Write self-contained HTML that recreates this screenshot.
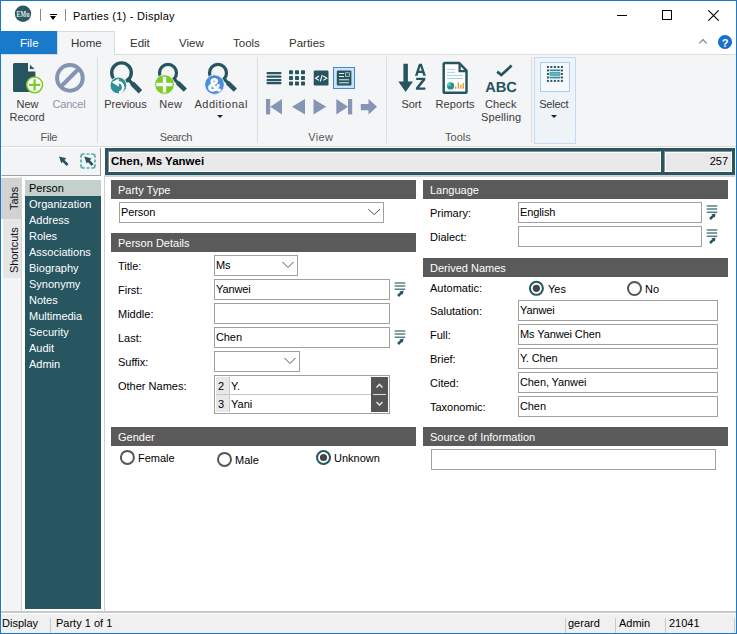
<!DOCTYPE html>
<html><head><meta charset="utf-8">
<style>
*{margin:0;padding:0;box-sizing:border-box}
html,body{width:737px;height:634px;overflow:hidden;background:#fff}
body{position:relative;font-family:"Liberation Sans",sans-serif;font-size:12px;color:#000}
.a{position:absolute}
.t{position:absolute;white-space:nowrap;line-height:1}
/* window border */
#wb{left:0;top:0;width:737px;height:634px;border:1px solid #1979ca;z-index:50;pointer-events:none}
.rib{color:#444}
.bar{position:absolute;background:#5a5a5a;color:#fff;font-size:11px;line-height:20px;padding-left:7px;letter-spacing:0px}
.inp{position:absolute;background:#fff;border:1px solid #a0a0a0;font-size:11px;line-height:18px;padding-left:1px;letter-spacing:-0.1px}
.lbl{position:absolute;font-size:11px;line-height:14px;color:#000;white-space:nowrap;letter-spacing:0px}
.nav{position:absolute;color:#fff;font-size:11px;line-height:16px;left:29px;white-space:nowrap;letter-spacing:0px}
.radio{position:absolute;width:14px;height:14px;border:1.5px solid #333;border-radius:50%;background:#fff}
.radio.on::after{content:"";position:absolute;left:2px;top:2px;width:7px;height:7px;border-radius:50%;background:#333}
.sb{position:absolute;top:614px;font-size:11px;line-height:19px;white-space:nowrap;color:#000;letter-spacing:0px}
.sep{position:absolute;top:618px;width:1px;height:15px;background:#c8c8c8}
</style></head><body>
<div id="wb" class="a"></div>

<!-- title bar -->
<svg class="a" style="left:14px;top:5px" width="18" height="18"><circle cx="9" cy="8.8" r="8.2" fill="#2a5a62"/><text x="2.6" y="11.6" font-family="Liberation Serif" font-weight="bold" font-size="8" fill="#e6ecec" textLength="13" lengthAdjust="spacingAndGlyphs">EMu</text></svg>
<div class="a" style="left:40px;top:9px;width:1px;height:12px;background:#8a8a8a"></div>
<div class="a" style="left:50px;top:14px;width:7px;height:1px;background:#000"></div>
<div class="a" style="left:50px;top:16px;width:0;height:0;border-left:3.5px solid transparent;border-right:3.5px solid transparent;border-top:4px solid #000"></div>
<div class="a" style="left:65px;top:9px;width:1px;height:12px;background:#8a8a8a"></div>
<div class="t" style="left:73px;top:11px;font-size:11px;letter-spacing:0.25px;color:#000">Parties (1) - Display</div>
<div class="a" style="left:617px;top:15px;width:10px;height:1px;background:#000"></div>
<div class="a" style="left:662px;top:10px;width:10px;height:10px;border:1px solid #000"></div>
<svg class="a" style="left:708px;top:10px" width="11" height="11"><path d="M0.3 0.3 L10.7 10.7 M10.7 0.3 L0.3 10.7" stroke="#000" stroke-width="1.1"/></svg>

<!-- tabs -->
<div class="a" style="left:1px;top:31px;width:56px;height:23px;background:#1979ca"></div>
<div class="t" style="left:20px;top:38px;color:#fff;font-size:11.5px">File</div>
<div class="a" style="left:57px;top:31px;width:58px;height:24px;background:#f4f5f6;border:1px solid #dadbdc;border-bottom:none;z-index:2"></div>
<div class="t rib" style="left:71px;top:38px;font-size:11.5px;color:#333;z-index:3">Home</div>
<div class="t" style="left:130px;top:38px;font-size:11.5px;color:#333">Edit</div>
<div class="t" style="left:179px;top:38px;font-size:11.5px;color:#333">View</div>
<div class="t" style="left:233px;top:38px;font-size:11.5px;color:#333">Tools</div>
<div class="t" style="left:289px;top:38px;font-size:11.5px;color:#333">Parties</div>
<svg class="a" style="left:698px;top:38px" width="11" height="8"><path d="M1.3 5.3 L5 1.6 L8.7 5.3" stroke="#808080" stroke-width="1.2" fill="none"/></svg>
<svg class="a" style="left:718px;top:35px" width="14" height="14"><circle cx="7" cy="7" r="6.6" fill="#1873cd" stroke="#0d62b6" stroke-width="0.8"/><text x="7.2" y="11.8" font-family="Liberation Sans" font-weight="bold" font-size="11" fill="#fff" text-anchor="middle">?</text></svg>

<!-- ribbon -->
<div class="a" style="left:1px;top:54px;width:735px;height:93px;background:#f4f5f6;border-top:1px solid #dadbdc;border-bottom:1px solid #dadbdc"></div>


<!-- ribbon groups -->
<div class="a" style="left:97px;top:57px;width:1px;height:86px;background:#dcdddf"></div>
<div class="a" style="left:257px;top:57px;width:1px;height:86px;background:#dcdddf"></div>
<div class="a" style="left:386px;top:57px;width:1px;height:86px;background:#dcdddf"></div>
<div class="a" style="left:531px;top:57px;width:1px;height:86px;background:#dcdddf"></div>

<!-- New Record icon -->
<svg class="a" style="left:10px;top:60px" width="40" height="40">
<path d="M4.5 3 H18 V11.6 H25.4 V30.5 Q25.4 32 24 32 H4.5 Q3 32 3 30.5 V4.5 Q3 3 4.5 3 Z" fill="#265560"/>
<path d="M19.9 4.7 V9.1 H24.6 Z" fill="#265560"/>
<circle cx="24.6" cy="24.8" r="7.9" fill="#fff" stroke="#7ccb26" stroke-width="1.5"/>
<path d="M24.6 19.2 V30.6 M18.9 24.8 H30.3" stroke="#7ccb26" stroke-width="2.3"/>
</svg>
<div class="t" style="left:16.6px;top:99px;font-size:11px;letter-spacing:-0.02px;color:#3a3a3a">New</div>
<div class="t" style="left:9.6px;top:112px;font-size:11px;letter-spacing:-0.07px;color:#3a3a3a">Record</div>
<!-- Cancel -->
<svg class="a" style="left:52px;top:60px" width="36" height="36">
<circle cx="17.9" cy="17.9" r="12.8" fill="none" stroke="#8494b3" stroke-width="4"/>
<path d="M27 8.5 L8.5 27" stroke="#8494b3" stroke-width="4"/>
</svg>
<div class="t" style="left:52.6px;top:99px;font-size:11px;letter-spacing:-0.25px;color:#8a96a8">Cancel</div>
<div class="t" style="left:40.6px;top:132px;font-size:11px;letter-spacing:-0.31px;color:#555">File</div>

<!-- Previous -->
<svg class="a" style="left:105px;top:58px" width="40" height="40">
<circle cx="16.5" cy="14.7" r="9.8" fill="none" stroke="#265560" stroke-width="3.4"/>
<path d="M22 20.3 L27.6 25.9" stroke="#265560" stroke-width="3.4"/>
<path d="M27 25.3 L35.4 33.8" stroke="#265560" stroke-width="5"/>
<circle cx="13.4" cy="27.4" r="8.4" fill="#2c8f99" stroke="#f4f5f6" stroke-width="1"/>
<path d="M13.6 24.2 A5.1 5.1 0 0 1 14 34.3" stroke="#fff" stroke-width="2.6" fill="none"/>
<path d="M6.8 24.3 L13.8 20.6 L13.8 28.8 Z" fill="#fff"/>
</svg>
<div class="t" style="left:104.3px;top:99px;font-size:11px;letter-spacing:-0.06px;color:#3a3a3a">Previous</div>
<!-- New search -->
<svg class="a" style="left:150px;top:58px" width="40" height="40">
<circle cx="18" cy="14.9" r="8.5" fill="none" stroke="#265560" stroke-width="3.2"/>
<path d="M23.5 20.5 L28.2 25.2" stroke="#265560" stroke-width="3.2"/>
<path d="M27.6 24.6 L35.3 32.2" stroke="#265560" stroke-width="4.6"/>
<circle cx="14.5" cy="26.5" r="9.8" fill="#7ccb26" stroke="#f4f5f6" stroke-width="0.8"/>
<path d="M14.5 18.7 V34.6 M6.2 26.5 H22.4" stroke="#f4f5f6" stroke-width="3.4"/>
</svg>
<div class="t" style="left:159.3px;top:99px;font-size:11px;letter-spacing:0.28px;color:#3a3a3a">New</div>
<!-- Additional -->
<svg class="a" style="left:195px;top:58px" width="44" height="40">
<circle cx="23" cy="14.9" r="8.5" fill="none" stroke="#265560" stroke-width="3.2"/>
<path d="M28.5 20.5 L33.2 25.2" stroke="#265560" stroke-width="3.2"/>
<path d="M32.6 24.6 L40.3 32.2" stroke="#265560" stroke-width="4.6"/>
<circle cx="19.5" cy="26.6" r="9.8" fill="#4a8fdc" stroke="#f4f5f6" stroke-width="0.8"/>
<text x="19.3" y="32.8" font-family="Liberation Sans" font-weight="bold" font-size="18" fill="#fff" stroke="#fff" stroke-width="0.8" text-anchor="middle" style="text-rendering:geometricPrecision">&amp;</text>
</svg>
<div class="t" style="left:194.4px;top:99px;font-size:11px;letter-spacing:0.52px;color:#3a3a3a">Additional</div>
<div class="a" style="left:217px;top:115px;width:0;height:0;border-left:3px solid transparent;border-right:3px solid transparent;border-top:3px solid #222"></div>
<div class="t" style="left:159.8px;top:132px;font-size:11px;letter-spacing:-0.45px;color:#555">Search</div>

<!-- View icons -->
<svg class="a" style="left:264px;top:68px" width="100" height="50">
<g fill="#265560">
<rect x="2.5" y="4" width="15" height="2.2" rx="1"/>
<rect x="2.5" y="7.5" width="15" height="2.2" rx="1"/>
<rect x="2.5" y="11" width="15" height="2.2" rx="1"/>
<rect x="2.5" y="14" width="15" height="2.2" rx="1"/>
<rect x="25" y="2.3" width="4" height="4" rx="0.8"/><rect x="31" y="2.3" width="4" height="4" rx="0.8"/><rect x="37" y="2.3" width="4" height="4" rx="0.8"/>
<rect x="25" y="8" width="4" height="4" rx="0.8"/><rect x="31" y="8" width="4" height="4" rx="0.8"/><rect x="37" y="8" width="4" height="4" rx="0.8"/>
<rect x="25" y="13.5" width="4" height="4" rx="0.8"/><rect x="31" y="13.5" width="4" height="4" rx="0.8"/><rect x="37" y="13.5" width="4" height="4" rx="0.8"/>
<rect x="49.7" y="2.5" width="14.8" height="15" rx="1.2"/>
</g>
<path d="M55 8 L51.5 10.2 L55 12.4 M56.3 13.5 L58.2 6.8 M59.3 8 L62.8 10.2 L59.3 12.4" stroke="#fff" stroke-width="1.1" fill="none"/>
</svg>
<div class="a" style="left:333px;top:67px;width:22px;height:22px;background:#cce4f7;border:1px solid #3c8de0"></div>
<svg class="a" style="left:336px;top:70px" width="16" height="16">
<rect x="0.8" y="0.5" width="14.6" height="15" rx="1.2" fill="#265560"/>
<path d="M3 3.5 H8 M3 6.5 H8 M3 9.8 H13 M3 12.8 H13" stroke="#e8eef0" stroke-width="1"/>
<rect x="9.5" y="2.8" width="3.8" height="3.5" fill="none" stroke="#c8d0d4" stroke-width="0.8"/>
</svg>
<svg class="a" style="left:262px;top:96px" width="120" height="22">
<g fill="#8595b3">
<rect x="4" y="3" width="4.2" height="15.4"/>
<path d="M8.2 10.7 L20 3 L20 18.4 Z"/>
<path d="M30 10.7 L43 3 L43 18.4 Z"/>
<path d="M51.5 3 L64.2 10.7 L51.5 18.4 Z"/>
<path d="M74.3 3 L86 10.7 L74.3 18.4 Z"/>
<rect x="86" y="3" width="4.2" height="15.4"/>
<path d="M98.8 7.9 L106.5 7.9 L106.5 3 L115 10.7 L106.5 18.4 L106.5 14.3 L98.8 14.3 Z"/>
</g>
</svg>
<div class="t" style="left:308.2px;top:132px;font-size:11px;letter-spacing:0.37px;color:#555">View</div>

<!-- Sort -->
<svg class="a" style="left:395px;top:58px" width="34" height="38">
<path d="M8.4 5.7 H12.9 V23.4 H18 L10.65 33.9 L3.3 23.4 H8.4 Z" fill="#265560"/>
<path fill-rule="evenodd" d="M19.9 17.7 L24 5.7 H26.8 L30.9 17.7 H28.2 L27.4 15.1 H23.4 L22.6 17.7 Z M24.1 12.8 H26.7 L25.4 8.6 Z" fill="#265560"/>
<path d="M21.2 19.8 H30.3 V21.9 L24.3 29.6 H30.4 V31.8 H20.9 V29.7 L26.9 22 H21.2 Z" fill="#265560"/>
</svg>
<div class="t" style="left:401.4px;top:99px;font-size:11px;letter-spacing:-0.06px;color:#3a3a3a">Sort</div>
<!-- Reports -->
<svg class="a" style="left:440px;top:60px" width="32" height="36">
<path d="M5 3.1 H19.3 L26.5 10.7 V31.5 Q26.5 32.8 25.2 32.8 H5 Q3.7 32.8 3.7 31.5 V4.4 Q3.7 3.1 5 3.1 Z" fill="#fff" stroke="#265560" stroke-width="2.5" stroke-linejoin="round"/>
<path d="M19.6 3.5 V11.2 H26.3" fill="none" stroke="#265560" stroke-width="2.3"/>
<path d="M7 9.4 H15 M7 12.4 H15 M7 15.5 H23 M7 18.5 H23" stroke="#a6d2ee" stroke-width="1"/>
<circle cx="10.6" cy="25.9" r="3.6" fill="#2c8f99"/>
<path d="M10.6 25.9 V22.3 A3.6 3.6 0 0 0 7 25.9 Z" fill="#4fd0ac"/>
<path d="M15.7 28.8 V26.5 M18.3 28.8 V22.2 M20.8 28.8 V24.5 M23.3 28.8 V23" stroke="#e39a2b" stroke-width="1.3"/>
</svg>
<div class="t" style="left:435.6px;top:99px;font-size:11px;letter-spacing:0.08px;color:#3a3a3a">Reports</div>
<!-- Check Spelling -->
<svg class="a" style="left:484px;top:60px" width="36" height="36">
<path d="M13.2 11.6 L17.3 15 L27.6 5.6" stroke="#265560" stroke-width="2.7" fill="none"/>
<text x="17.1" y="31.6" font-family="Liberation Sans" font-weight="bold" font-size="14.6" fill="#265560" text-anchor="middle" style="text-rendering:geometricPrecision">ABC</text>
</svg>
<div class="t" style="left:485.0px;top:99px;font-size:11px;letter-spacing:0.05px;color:#3a3a3a">Check</div>
<div class="t" style="left:480.9px;top:112px;font-size:11px;letter-spacing:0.17px;color:#3a3a3a">Spelling</div>
<div class="t" style="left:445.1px;top:132px;font-size:11px;letter-spacing:-0.02px;color:#555">Tools</div>

<!-- Select -->
<div class="a" style="left:534px;top:57px;width:42px;height:87px;background:#eef3f8;border:1px solid #c4daf2"></div>
<div class="a" style="left:540px;top:62px;width:30px;height:30px;background:#f6f9fc;border:1px solid #a9cdf2"></div>
<svg class="a" style="left:545px;top:64px" width="20" height="20"><g fill="#265560"><rect x="1.90" y="2.00" width="2" height="2"/><rect x="1.90" y="15.90" width="2" height="2"/><rect x="5.35" y="2.00" width="2" height="2"/><rect x="5.35" y="15.90" width="2" height="2"/><rect x="8.90" y="2.00" width="2" height="2"/><rect x="8.90" y="15.90" width="2" height="2"/><rect x="12.40" y="2.00" width="2" height="2"/><rect x="12.40" y="15.90" width="2" height="2"/><rect x="15.90" y="2.00" width="2" height="2"/><rect x="15.90" y="15.90" width="2" height="2"/><rect x="1.90" y="5.45" width="2" height="2"/><rect x="15.90" y="5.45" width="2" height="2"/><rect x="1.90" y="8.95" width="2" height="2"/><rect x="15.90" y="8.95" width="2" height="2"/><rect x="1.90" y="12.45" width="2" height="2"/><rect x="15.90" y="12.45" width="2" height="2"/></g>
<rect x="4.6" y="5.5" width="10.7" height="1.7" fill="#2c8f99"/>
<rect x="4.6" y="8.2" width="10.7" height="3.5" fill="#2c8f99"/>
<rect x="5.2" y="9.2" width="9.5" height="1.5" fill="#7fbcbf"/>
<rect x="4.6" y="12.7" width="10.7" height="1.7" fill="#2c8f99"/>
</svg>
<div class="t" style="left:539.2px;top:99px;font-size:11px;letter-spacing:-0.23px;color:#3a3a3a">Select</div>
<div class="a" style="left:551px;top:115px;width:0;height:0;border-left:3px solid transparent;border-right:3px solid transparent;border-top:3px solid #222"></div>


<!-- left panel -->
<div class="a" style="left:1px;top:148px;width:100px;height:28px;background:#f3f4f5;border-left:1px solid #fff;border-right:1px solid #a0a0a0;border-bottom:1px solid #a0a0a0"></div>
<svg class="a" style="left:55px;top:152px" width="16" height="16">
<path d="M4 4.4 L11.3 6.3 L6.3 11.3 Z" fill="#265560"/><path d="M8 8.3 L12.6 13" stroke="#265560" stroke-width="2.6"/>
</svg>
<svg class="a" style="left:79px;top:152px" width="19" height="18">
<path d="M2 5.8 V4.5 Q2 2 4.5 2 H5.8 M12.2 2 H13.5 Q16 2 16 4.5 V5.8 M16 12.2 V13.5 Q16 16 13.5 16 H12.2 M5.8 16 H4.5 Q2 16 2 13.5 V12.2 M7.6 2 H10.4 M16 7.6 V10.4 M10.4 16 H7.6 M2 10.4 V7.6" fill="none" stroke="#5aacb0" stroke-width="1.7"/>
<path d="M5.3 4.6 L12.6 6.5 L7.6 11.5 Z" fill="#265560"/><path d="M9.3 8.5 L13.6 13" stroke="#265560" stroke-width="2.6"/>
</svg>
<div class="a" style="left:1px;top:176px;width:103px;height:435px;background:#fff"></div><div class="a" style="left:3px;top:177px;width:18px;height:434px;background:#f3f4f6"></div><div class="a" style="left:21px;top:177px;width:1px;height:434px;background:#d4d4d4"></div>
<div class="a" style="left:1px;top:178px;width:20px;height:41px;background:#d2d2d2"></div>
<div class="a" style="left:3px;top:219px;width:18px;height:59px;background:#e6e6e6"></div>
<div class="t" style="left:9px;top:210px;font-size:11px;transform:rotate(-90deg);transform-origin:0 0;color:#111">Tabs</div>
<div class="t" style="left:9px;top:273px;font-size:11px;letter-spacing:-0.1px;transform:rotate(-90deg);transform-origin:0 0;color:#111">Shortcuts</div>
<div class="a" style="left:25px;top:180px;width:76px;height:429px;background:#275560"></div>
<div class="a" style="left:25px;top:180px;width:76px;height:16px;background:#c3d0cc"></div>

<div class="nav" style="top:180px;color:#000">Person</div>
<div class="nav" style="top:196px">Organization</div>
<div class="nav" style="top:212px">Address</div>
<div class="nav" style="top:228px">Roles</div>
<div class="nav" style="top:244px">Associations</div>
<div class="nav" style="top:260px">Biography</div>
<div class="nav" style="top:276px">Synonymy</div>
<div class="nav" style="top:292px">Notes</div>
<div class="nav" style="top:308px">Multimedia</div>
<div class="nav" style="top:324px">Security</div>
<div class="nav" style="top:340px">Audit</div>
<div class="nav" style="top:356px">Admin</div>

<!-- form -->
<div class="a" style="left:104px;top:175px;width:1px;height:437px;background:#d0d0d0"></div>
<div class="a" style="left:1px;top:611px;width:735px;height:2px;background:#c8c8c8"></div>
<div class="a" style="left:104px;top:175px;width:631px;height:2px;background:#d4d2d2"></div>
<!-- record header -->
<div class="a" style="left:105px;top:148px;width:630px;height:27px;background:#275560"></div>
<div class="a" style="left:108px;top:151px;width:553px;height:21px;background:#e8e9eb;border-left:1px solid #8c8c8c;border-top:1px solid #8c8c8c;border-right:1px solid #fff;border-bottom:1px solid #fff;box-shadow:inset 1px 1px 0 #fff"></div>
<div class="a" style="left:664px;top:151px;width:68px;height:21px;background:#e8e9eb;border-left:1px solid #8c8c8c;border-top:1px solid #8c8c8c;border-right:1px solid #fff;border-bottom:1px solid #fff;box-shadow:inset 1px 1px 0 #fff"></div>
<div class="t" style="left:111px;top:156px;font-size:11.5px;font-weight:bold">Chen, Ms Yanwei</div>
<div class="t" style="right:9px;top:156px;font-size:11px">257</div>

<!-- Party type -->
<div class="bar" style="left:111px;top:180px;width:305px;height:19px">Party Type</div>
<div class="inp" style="left:119px;top:202px;width:265px;height:21px">Person</div>
<svg class="a" style="left:367px;top:208px" width="15" height="8"><path d="M1.3 1.2 L7.2 6.6 L13 1.2" stroke="#505050" stroke-width="1" fill="none"/></svg>

<div class="bar" style="left:111px;top:233px;width:305px;height:19px">Person Details</div>
<div class="lbl" style="left:118px;top:259px">Title:</div>
<div class="inp" style="left:214px;top:255px;width:84px;height:21px">Ms</div>
<svg class="a" style="left:282px;top:261px" width="13" height="8"><path d="M0.5 1 L6 6.5 L11.5 1" stroke="#555" stroke-width="1" fill="none"/></svg>
<div class="lbl" style="left:118px;top:283px">First:</div>
<div class="inp" style="left:214px;top:279px;width:176px;height:21px">Yanwei</div>
<div class="lbl" style="left:118px;top:307px">Middle:</div>
<div class="inp" style="left:214px;top:303px;width:176px;height:21px"></div>
<div class="lbl" style="left:118px;top:331px">Last:</div>
<div class="inp" style="left:214px;top:327px;width:176px;height:21px">Chen</div>
<div class="lbl" style="left:118px;top:355px">Suffix:</div>
<div class="inp" style="left:214px;top:351px;width:86px;height:21px"></div>
<svg class="a" style="left:284px;top:357px" width="13" height="8"><path d="M0.5 1 L6 6.5 L11.5 1" stroke="#555" stroke-width="1" fill="none"/></svg>
<div class="lbl" style="left:118px;top:379px">Other Names:</div>
<div class="a" style="left:214px;top:375px;width:176px;height:39px;background:#fff;border:1px solid #a0a0a0"></div>
<div class="a" style="left:216px;top:377px;width:14px;height:35px;background:#e8e8e8;border-right:1px solid #c8c8c8"></div>
<div class="a" style="left:216px;top:394px;width:155px;height:1px;background:#c8c8c8"></div>
<div class="t" style="left:218px;top:381px;font-size:11px">2</div>
<div class="t" style="left:231px;top:381px;font-size:11px">Y.</div>
<div class="t" style="left:218px;top:399px;font-size:11px">3</div>
<div class="t" style="left:231px;top:399px;font-size:11px">Yani</div>
<div class="a" style="left:371px;top:377px;width:17px;height:35px;background:#555"></div>
<div class="a" style="left:373px;top:394px;width:13px;height:1px;background:#ddd"></div>
<svg class="a" style="left:371px;top:377px" width="17" height="35">
<path d="M5.5 10.5 L8.5 7.5 L11.5 10.5 M5.5 25 L8.5 28 L11.5 25" stroke="#ddd" stroke-width="1.6" fill="none"/>
</svg>

<!-- gender -->
<div class="bar" style="left:111px;top:427px;width:305px;height:19px">Gender</div>
<svg class="a" style="left:119px;top:449px" width="16" height="16"><circle cx="8.4" cy="8.4" r="6.5" fill="#fff" stroke="#555" stroke-width="2"/></svg>
<svg class="a" style="left:216px;top:451px" width="16" height="16"><circle cx="8.5" cy="8.4" r="6.5" fill="#fff" stroke="#555" stroke-width="2"/></svg>
<svg class="a" style="left:315px;top:449px" width="16" height="16"><circle cx="8.5" cy="8.5" r="6.5" fill="#fff" stroke="#2a5a66" stroke-width="2.1"/><circle cx="8.5" cy="8.5" r="3.6" fill="#444"/></svg>
<svg class="a" style="left:528px;top:280px" width="16" height="16"><circle cx="8.4" cy="8.3" r="6.5" fill="#fff" stroke="#2a5a66" stroke-width="2.1"/><circle cx="8.4" cy="8.3" r="3.6" fill="#444"/></svg>
<svg class="a" style="left:626px;top:280px" width="16" height="16"><circle cx="8.5" cy="8.5" r="6.5" fill="#fff" stroke="#555" stroke-width="2"/></svg>
<div class="lbl" style="left:138px;top:451px">Female</div>
<div class="lbl" style="left:235px;top:453px">Male</div>
<div class="lbl" style="left:334px;top:451px">Unknown</div>

<!-- Language -->
<div class="bar" style="left:423px;top:180px;width:305px;height:19px">Language</div>
<div class="lbl" style="left:430px;top:206px">Primary:</div>
<div class="inp" style="left:518px;top:202px;width:184px;height:21px">English</div>
<div class="lbl" style="left:430px;top:230px">Dialect:</div>
<div class="inp" style="left:518px;top:226px;width:184px;height:21px"></div>

<div class="bar" style="left:423px;top:258px;width:305px;height:19px">Derived Names</div>
<div class="lbl" style="left:430px;top:281px">Automatic:</div>
<div class="lbl" style="left:548px;top:282px">Yes</div>
<div class="lbl" style="left:645px;top:282px">No</div>
<div class="lbl" style="left:430px;top:304px">Salutation:</div>
<div class="inp" style="left:518px;top:300px;width:200px;height:21px">Yanwei</div>
<div class="lbl" style="left:430px;top:328px">Full:</div>
<div class="inp" style="left:518px;top:324px;width:200px;height:21px">Ms Yanwei Chen</div>
<div class="lbl" style="left:430px;top:352px">Brief:</div>
<div class="inp" style="left:518px;top:348px;width:200px;height:21px">Y. Chen</div>
<div class="lbl" style="left:430px;top:376px">Cited:</div>
<div class="inp" style="left:518px;top:372px;width:200px;height:21px">Chen, Yanwei</div>
<div class="lbl" style="left:430px;top:400px">Taxonomic:</div>
<div class="inp" style="left:518px;top:396px;width:200px;height:21px">Chen</div>

<div class="bar" style="left:423px;top:427px;width:305px;height:19px">Source of Information</div>
<div class="inp" style="left:431px;top:449px;width:285px;height:21px"></div>
<svg class="a" style="left:394px;top:282px" width="14" height="16"><path d="M0.7 1 H11.3 M0.7 4 H11.3 M0.7 7.2 H11.3" stroke="#5a8288" stroke-width="1.4"/><path d="M4 14 L7.6 10.6" stroke="#265560" stroke-width="2.6"/><path d="M5.4 9.6 L9.6 8.6 L8.8 12.6 Z" fill="#265560"/></svg><svg class="a" style="left:394px;top:330px" width="14" height="16"><path d="M0.7 1 H11.3 M0.7 4 H11.3 M0.7 7.2 H11.3" stroke="#5a8288" stroke-width="1.4"/><path d="M4 14 L7.6 10.6" stroke="#265560" stroke-width="2.6"/><path d="M5.4 9.6 L9.6 8.6 L8.8 12.6 Z" fill="#265560"/></svg><svg class="a" style="left:706px;top:205px" width="14" height="16"><path d="M0.7 1 H11.3 M0.7 4 H11.3 M0.7 7.2 H11.3" stroke="#5a8288" stroke-width="1.4"/><path d="M4 14 L7.6 10.6" stroke="#265560" stroke-width="2.6"/><path d="M5.4 9.6 L9.6 8.6 L8.8 12.6 Z" fill="#265560"/></svg><svg class="a" style="left:706px;top:229px" width="14" height="16"><path d="M0.7 1 H11.3 M0.7 4 H11.3 M0.7 7.2 H11.3" stroke="#5a8288" stroke-width="1.4"/><path d="M4 14 L7.6 10.6" stroke="#265560" stroke-width="2.6"/><path d="M5.4 9.6 L9.6 8.6 L8.8 12.6 Z" fill="#265560"/></svg>
<!-- status bar -->
<div class="a" style="left:1px;top:613px;width:735px;height:20px;background:#f0f0f0;border-top:1px solid #fff"></div>
<div class="sb" style="left:2px">Display</div>
<div class="sep" style="left:50px"></div>
<div class="sb" style="left:56px">Party 1 of 1</div>
<div class="sep" style="left:565px"></div>
<div class="sb" style="left:568px">gerard</div>
<div class="sep" style="left:615px"></div>
<div class="sb" style="left:619px">Admin</div>
<div class="sep" style="left:665px"></div>
<div class="sb" style="left:669px">21041</div>
<div class="sep" style="left:734px"></div>

</body></html>
